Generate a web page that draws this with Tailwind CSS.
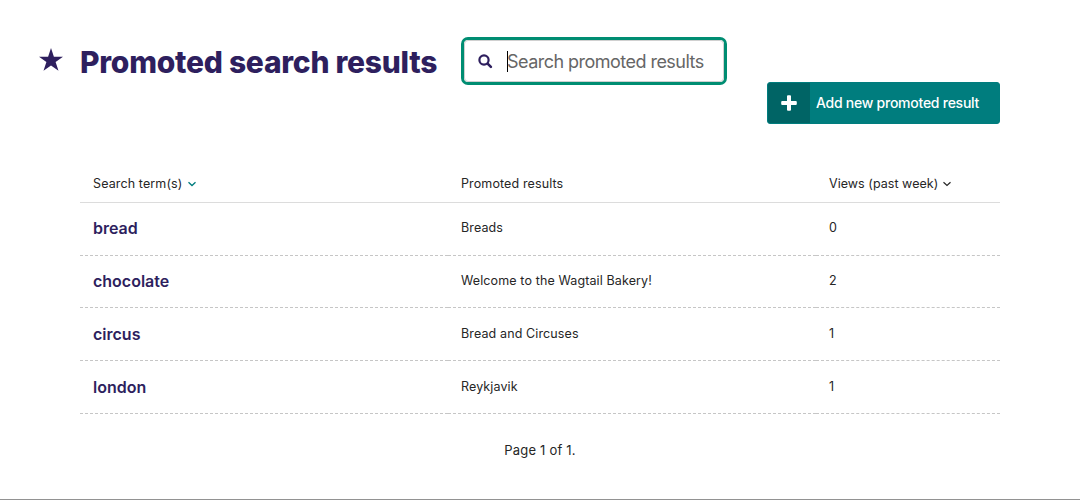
<!DOCTYPE html>
<html lang="en">
<head>
<meta charset="utf-8">
<title>Promoted search results</title>
<script src="https://cdn.jsdelivr.net/npm/@tailwindcss/browser@4"></script>
</head>
<body class="bg-white">
<div class="flex h-[500px] flex-col overflow-hidden border-b border-[#929292] bg-white font-['Inter','Liberation_Sans',sans-serif] text-[13px] text-[#262626]">
  <header class="flex h-[162px] items-start pr-20">
    <svg class="ml-[39px] mt-12 h-[23px] w-6 shrink-0 fill-[#2e1f5e]" viewBox="0 0 24 23"><path d="M12 0l2.900 8.800H24l-7.400 5.200 2.900 8.800-7.500-5.400-7.500 5.400 2.900-8.800L0 8.800h9.100z"/></svg>
    <h1 class="ml-[17px] mt-[42px] w-[381px] shrink-0 whitespace-nowrap text-[30px] leading-10 font-extrabold tracking-[-0.25px] text-[#2e1f5e]">Promoted search results</h1>
    <div class="mt-[37px] flex h-12 w-[266px] shrink-0 items-center rounded-[7px] border-[3px] border-[#008d72]">
      <div class="flex h-full w-full items-center rounded-[4px] border border-[#d0d0d0]">
        <svg class="ml-[13px] h-[15px] w-[15px] shrink-0 fill-none stroke-[#2e1f5e]" viewBox="0 0 15 15"><circle cx="6" cy="6" r="4.600" stroke-width="2.200"/><path d="M9.600 9.600l3.300 3.300" stroke-width="2.600" stroke-linecap="round"/></svg>
        <div class="ml-3.5 h-[21px] w-px bg-black"></div>
        <div class="-ml-px whitespace-nowrap pt-0.5 text-[18px] leading-6 tracking-[-0.53px] text-[#666]">Search promoted results</div>
      </div>
    </div>
    <a class="ml-auto mt-[82px] flex h-[42px] w-[233px] shrink-0 items-stretch overflow-hidden rounded-[3px] border border-[#007d7e] bg-[#007d7e] text-white">
      <span class="flex w-[42px] items-center justify-center bg-[#006465]"><svg class="h-4 w-4 fill-white" viewBox="0 0 16 16"><path d="M6 1.200a1 1 0 0 1 1-1h2a1 1 0 0 1 1 1V6h4.800a1 1 0 0 1 1 1v2a1 1 0 0 1-1 1H10v4.800a1 1 0 0 1-1 1H7a1 1 0 0 1-1-1V10H1.200a1 1 0 0 1-1-1V7a1 1 0 0 1 1-1H6z"/></svg></span>
      <span class="ml-1.5 self-center whitespace-nowrap pb-0.5 text-[14px] font-medium tracking-[-0.25px]">Add new promoted result</span>
    </a>
  </header>
  <table class="mx-20 w-[920px] table-fixed border-separate border-spacing-0 text-left text-[12.5px] tracking-[0.12px]">
    <colgroup><col class="w-[368px]"><col class="w-[368px]"><col class="w-[184px]"></colgroup>
    <thead>
      <tr class="h-[41px] [&>th]:border-b [&>th]:border-[#dcdcdc] [&>th]:pl-[13px] [&>th]:font-normal [&>th]:pt-1 [&>th]:whitespace-nowrap">
        <th><span class="flex items-center">Search term(s)<svg class="ml-[5px] h-2 w-2 fill-none stroke-[#007d7e]" viewBox="0 0 8 8"><path d="M.5 2.200L4 5.500l3.500-3.300" stroke-width="1.300"/></svg></span></th>
        <th>Promoted results</th>
        <th><span class="flex items-center tracking-[0.04px]">Views (past week)<svg class="ml-[5px] h-2 w-2 fill-none stroke-[#262626]" viewBox="0 0 8 8"><path d="M.5 2.200L4 5.500l3.500-3.300" stroke-width="1.200"/></svg></span></th>
      </tr>
    </thead>
    <tbody class="[&_td]:border-b [&_td]:border-dashed [&_td]:border-[#c6c6c6] [&_td]:pl-[13px]">
      <tr class="h-[53px]"><td class="pb-0.5 text-base font-semibold tracking-normal text-[#2e1f5e]">bread</td><td class="pb-0.5">Breads</td><td class="pb-0.5">0</td></tr>
      <tr class="h-[52px]"><td class="pb-0.5 text-base font-semibold tracking-normal text-[#2e1f5e]">chocolate</td><td>Welcome to the Wagtail Bakery!</td><td>2</td></tr>
      <tr class="h-[53px]"><td class="text-base font-semibold tracking-normal text-[#2e1f5e]">circus</td><td>Bread and Circuses</td><td>1</td></tr>
      <tr class="h-[53px]"><td class="text-base font-semibold tracking-normal text-[#2e1f5e]">london</td><td>Reykjavik</td><td>1</td></tr>
    </tbody>
  </table>
  <p class="mt-[26px] text-center leading-5 tracking-[0.2px]">Page 1 of 1.</p>
</div>
</body>
</html>
